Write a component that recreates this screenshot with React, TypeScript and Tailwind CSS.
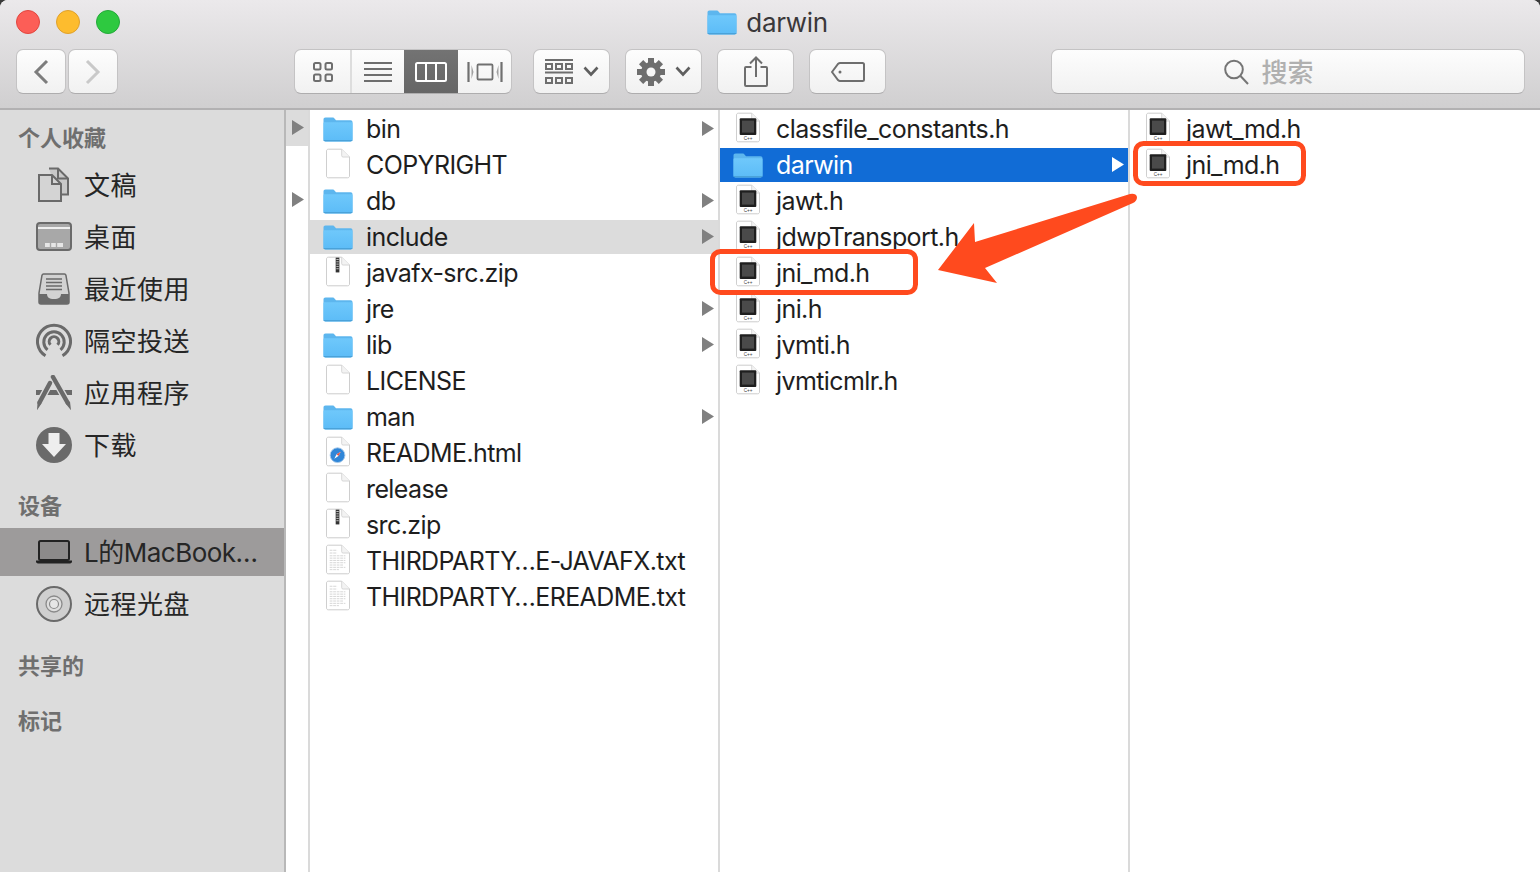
import React from "react";

const FONT = "font-['Inter','Noto_Sans_CJK_SC',sans-serif]";

function Folder({ w = 30, h = 25 }: { w?: number; h?: number }) {
  return (
    <svg width={w} height={h} viewBox="0 0 30 25" className="shrink-0">
      <defs>
        <linearGradient id="fg" x1="0" y1="0" x2="0" y2="1">
          <stop offset="0" stopColor="#6fc8fb" />
          <stop offset="1" stopColor="#5cbcf7" />
        </linearGradient>
      </defs>
      <path d="M0.5 2.5C0.5 1.2 1.2.5 2.5.5h7c1 0 1.6.4 2.2 1.2l1.3 1.6h14.5c1.3 0 2 .7 2 2v17.2c0 1.3-.7 2-2 2h-25c-1.3 0-2-.7-2-2z" fill="#5db6ee" />
      <path d="M0.5 6.5c0-.8.5-1.3 1.3-1.3h26.4c.8 0 1.3.5 1.3 1.3v15.7c0 1.3-.7 2-2 2h-25c-1.3 0-2-.7-2-2z" fill="url(#fg)" />
      <path d="M.5 23h29v.6c-.3.5-.9.7-1.6.7H2.1c-.7 0-1.3-.2-1.6-.7z" fill="#4aa2d9" />
    </svg>
  );
}

function Sheet({ children }: { children?: React.ReactNode }) {
  return (
    <svg width="24" height="31" viewBox="0 0 26 32" className="-mt-[3px] shrink-0">
      <path d="M2.5.5H17L25.5 9v20.5c0 1-.8 2-2 2h-21c-1.2 0-2-1-2-2v-27c0-1 .8-2 2-2z" fill="#fff" stroke="#c8c8c8" />
      <path d="M17 .5V7.500c0 1 .6 1.500 1.500 1.500H25.500" fill="#f3f3f3" stroke="#d4d4d4" />
      {children}
    </svg>
  );
}

function PlainFile() {
  return <Sheet />;
}

function ZipFile() {
  return (
    <Sheet>
      <rect x="10.500" y="1" width="4" height="16" fill="#333" />
      <path d="M11.200 3h2.600M11.200 5.500h2.600M11.200 8h2.600M11.200 10.500h2.600M11.200 13h2.600" stroke="#ddd" strokeWidth=".9" />
    </Sheet>
  );
}

function HeaderFile() {
  return (
    <Sheet>
      <rect x="4" y="6" width="18" height="18" rx="1" fill="#1f1f1f" />
      <rect x="6.500" y="8.500" width="13" height="13" fill="#4a4a4a" />
      <text x="13" y="29.500" textAnchor="middle" fontSize="5" fill="#444" fontFamily="Liberation Sans, sans-serif">C++</text>
    </Sheet>
  );
}

function HtmlFile() {
  return (
    <Sheet>
      <circle cx="12.500" cy="20" r="8" fill="#2f86d8" stroke="#a7c9e8" />
      <path d="M16 16.200 13.500 21 9 23.800 11.500 19z" fill="#fff" />
      <path d="M16 16.200 13.500 21 11.500 19z" fill="#e8503f" />
    </Sheet>
  );
}

function TextFile() {
  return (
    <Sheet>
      <path d="M4 6h8M4 9h8M4 12h17M4 14.500h17M4 17h17M4 19.500h17M4 22h15M4 24.500h17M4 27h10" stroke="#d2d2d2" strokeWidth="1" strokeDasharray="3 .8" />
    </Sheet>
  );
}

type Kind = "folder" | "plain" | "zip" | "h" | "html" | "text";

function FileIcon({ kind }: { kind: Kind }) {
  if (kind === "folder") return <Folder />;
  if (kind === "zip") return <ZipFile />;
  if (kind === "h") return <HeaderFile />;
  if (kind === "html") return <HtmlFile />;
  if (kind === "text") return <TextFile />;
  return <PlainFile />;
}

function Tri({ color = "#808080" }: { color?: string }) {
  return (
    <svg width="12" height="15" viewBox="0 0 12 15" className="mb-[2px]">
      <path d="M0 0 12 7.500 0 15z" fill={color} />
    </svg>
  );
}

type Row = { name: string; kind: Kind; arrow?: boolean; state?: "blue" | "gray" };

function Column({ rows, className }: { rows: Row[]; className: string }) {
  return (
    <div className={`flex flex-col gap-[2px] pt-[2px] ${className}`}>
      {rows.map((r) => (
        <div
          key={r.name}
          className={`relative flex h-[34px] items-center pr-[4px] ${
            r.state === "blue" ? "bg-[#116cd6] text-white" : r.state === "gray" ? "bg-[#dcdcdc] text-[#1e1e1e]" : "text-[#1e1e1e]"
          }`}
        >
          <div className="flex w-[56px] shrink-0 justify-center">
            <FileIcon kind={r.kind} />
          </div>
          <span className="flex-1 whitespace-nowrap pt-[2px] text-[25px] tracking-[-0.6px]">{r.name}</span>
          {r.arrow && <Tri color={r.state === "blue" ? "#ffffff" : "#808080"} />}
        </div>
      ))}
    </div>
  );
}

const col1: Row[] = [
  { name: "bin", kind: "folder", arrow: true },
  { name: "COPYRIGHT", kind: "plain" },
  { name: "db", kind: "folder", arrow: true },
  { name: "include", kind: "folder", arrow: true, state: "gray" },
  { name: "javafx-src.zip", kind: "zip" },
  { name: "jre", kind: "folder", arrow: true },
  { name: "lib", kind: "folder", arrow: true },
  { name: "LICENSE", kind: "plain" },
  { name: "man", kind: "folder", arrow: true },
  { name: "README.html", kind: "html" },
  { name: "release", kind: "plain" },
  { name: "src.zip", kind: "zip" },
  { name: "THIRDPARTY…E-JAVAFX.txt", kind: "text" },
  { name: "THIRDPARTY…EREADME.txt", kind: "text" },
];

const col2: Row[] = [
  { name: "classfile_constants.h", kind: "h" },
  { name: "darwin", kind: "folder", arrow: true, state: "blue" },
  { name: "jawt.h", kind: "h" },
  { name: "jdwpTransport.h", kind: "h" },
  { name: "jni_md.h", kind: "h" },
  { name: "jni.h", kind: "h" },
  { name: "jvmti.h", kind: "h" },
  { name: "jvmticmlr.h", kind: "h" },
];

const col3: Row[] = [
  { name: "jawt_md.h", kind: "h" },
  { name: "jni_md.h", kind: "h" },
];

const G = "#6a6a6a";

const sideIcons: Record<string, React.ReactNode> = {
  doc: (
    <svg width="36" height="36" viewBox="0 0 36 36">
      <path d="M13 1.500h9l10 10v16H22" fill="#c9c9c9" stroke={G} strokeWidth="2" />
      <path d="M22 1.500v10h10" fill="none" stroke={G} strokeWidth="2" />
      <path d="M3 8h13l9 9v17H3z" fill="#d4d4d4" stroke={G} strokeWidth="2" />
      <path d="M16 8v9h9" fill="none" stroke={G} strokeWidth="2" />
    </svg>
  ),
  desk: (
    <svg width="36" height="30" viewBox="0 0 36 30">
      <rect x="1" y="1" width="34" height="27" rx="3" fill="#a8a8a8" stroke={G} strokeWidth="2" />
      <path d="M2 6h32" stroke="#efefef" strokeWidth="2" />
      <path d="M9 25v-4h18v4z" fill="#e6e6e6" />
      <path d="M14.500 21v4M20.500 21v4" stroke="#a8a8a8" strokeWidth="1.400" />
    </svg>
  ),
  recent: (
    <svg width="32" height="32" viewBox="0 0 32 32">
      <path d="M5.500 1h21c.8 0 1.200.4 1.400 1.200L31 20v9c0 1.200-.8 2-2 2H3c-1.200 0-2-.8-2-2v-9L4 2.200C4.300 1.400 4.700 1 5.500 1z" fill="#d2d2d2" stroke={G} strokeWidth="1.500" />
      <path d="M8 6h16M8 9.500h16M8 13h16M8 16.500h16" stroke={G} strokeWidth="1.600" />
      <path d="M1 21h8c0 3 2 5 7 5s7-2 7-5h8v8c0 1.200-.8 2-2 2H3c-1.200 0-2-.8-2-2z" fill={G} />
    </svg>
  ),
  air: (
    <svg width="36" height="36" viewBox="0 0 36 36" fill="none" stroke={G} strokeWidth="3">
      <path d="M9.500 32.800A16.500 16.500 0 1 1 26.500 32.800" />
      <path d="M11.500 26.800A10.200 10.200 0 1 1 24.500 26.800" />
      <path d="M14.500 21.800A4.800 4.800 0 1 1 21.500 21.800" />
    </svg>
  ),
  app: (
    <svg width="40" height="36" viewBox="4 3 40 36">
      <rect x="6" y="18" width="36" height="5" fill={G} />
      <path d="M13 23h22l-2.500-5h-17z" fill="#c8c8c8" />
      <path d="M16 18h16v5H16z" fill={G} />
      <path d="M23 5l16 28" stroke="#dcdcdc" strokeWidth="7" />
      <path d="M20 11 8 33" stroke="#dcdcdc" strokeWidth="7" />
      <path d="M23 5l14.500 25.500" stroke={G} strokeWidth="4.500" strokeLinecap="round" />
      <path d="M20 11 9.500 30.500" stroke={G} strokeWidth="4.500" strokeLinecap="round" />
      <path d="M35.500 31.500 41 38.200l-1-8.700zM11.500 31.500 7 38.200l.6-8.700z" fill={G} />
    </svg>
  ),
  down: (
    <svg width="36" height="36" viewBox="0 0 36 36">
      <circle cx="18" cy="18" r="18" fill={G} />
      <path d="M12.500 6h11v11H30L18 30 6 17h6.500z" fill="#eeeeee" />
    </svg>
  ),
  mac: (
    <svg width="36" height="24" viewBox="0 0 36 24">
      <rect x="3" y="1" width="30" height="19" rx="1.500" fill="#8c8a8a" stroke="#222" strokeWidth="2" />
      <path d="M0 20.500h36v1c0 1-1 2-2 2H2c-1 0-2-1-2-2z" fill="#222" />
    </svg>
  ),
  disc: (
    <svg width="36" height="36" viewBox="0 0 36 36">
      <circle cx="18" cy="18" r="17" fill="#cfcfcf" stroke={G} strokeWidth="2" />
      <circle cx="18" cy="18" r="8" fill="#dedede" stroke="#8a8a8a" strokeWidth="1.300" />
      <circle cx="18" cy="18" r="4.500" fill="#e6e6e6" stroke="#8a8a8a" strokeWidth="1.200" />
    </svg>
  ),
};

function SideHead({ t, className = "" }: { t: string; className?: string }) {
  return <div className={`flex h-[44px] items-center pl-[18px] text-[22px] font-bold text-[#6f6f6f] ${className}`}>{t}</div>;
}

function SideItem({ icon, t, selected }: { icon: string; t: string; selected?: boolean }) {
  return (
    <div className={`flex items-center text-[26px] text-[#262626] ${selected ? "h-[48px] bg-[#9d9b9b] text-[#111111]" : "h-[52px]"}`}>
      <div className="ml-[34px] flex w-[40px] justify-center">{sideIcons[icon]}</div>
      <span className={`ml-[10px] whitespace-nowrap ${selected ? "tracking-[-0.5px]" : "tracking-[0.5px]"}`}>{t}</span>
    </div>
  );
}

function Btn({ className = "", children }: { className?: string; children?: React.ReactNode }) {
  return (
    <div className={`flex h-[45px] items-center justify-center rounded-[7px] border border-[#c4c3c4] border-b-[#aeadae] bg-gradient-to-b from-[#fdfdfd] to-[#f1f1f1] ${className}`}>
      {children}
    </div>
  );
}

function Chevron() {
  return (
    <svg width="16" height="11" viewBox="0 0 16 11" fill="none" stroke="#5f5f5f" strokeWidth="2.600">
      <path d="M1.500 1.500 8 8.500l6.500-7" />
    </svg>
  );
}

const teeth = [0, 45, 90, 135, 180, 225, 270, 315];

export default function App() {
  return (
    <div className={`h-[872px] w-[1540px] overflow-hidden bg-[#3a3a3a] ${FONT}`}>
      <div className="relative flex h-full flex-col overflow-hidden rounded-t-[8px] bg-white">
        {/* toolbar */}
        <div className="flex h-[110px] shrink-0 flex-col border-b-2 border-[#b2b1b2] bg-gradient-to-b from-[#ebe9eb] to-[#d0cfd0]">
          <div className="relative flex h-[44px] shrink-0 items-center justify-center gap-[9px] pr-[5px] pt-[1px]">
            <div className="absolute left-[16px] top-[10px] flex gap-[16px]">
              <div className="h-[24px] w-[24px] rounded-full border border-[#e2463f] bg-[#fc5e57]" />
              <div className="h-[24px] w-[24px] rounded-full border border-[#e0a12b] bg-[#fdbc2e]" />
              <div className="h-[24px] w-[24px] rounded-full border border-[#24a93a] bg-[#2ec940]" />
            </div>
            <Folder />
            <span className="text-[26px] tracking-[-0.35px] text-[#3a383a]">darwin</span>
          </div>
          <div className="flex h-[45px] shrink-0 items-start pl-[16px] pt-[5px]">
            <div className="flex gap-[2px]">
              <Btn className="w-[50px]">
                <svg width="16" height="26" viewBox="0 0 16 26" fill="none" stroke="#7d7d7d" strokeWidth="3">
                  <path d="M14 2 3 13l11 11" />
                </svg>
              </Btn>
              <Btn className="w-[50px]">
                <svg width="16" height="26" viewBox="0 0 16 26" fill="none" stroke="#c9c9c9" strokeWidth="3">
                  <path d="M2 2l11 11L2 24" />
                </svg>
              </Btn>
            </div>
            <div className="ml-[176px] flex h-[45px] w-[218px] overflow-hidden rounded-[7px] border border-[#c4c3c4] border-b-[#aeadae] bg-gradient-to-b from-[#fdfdfd] to-[#f1f1f1]">
              <div className="flex w-[57px] items-center justify-center border-r-2 border-[#dddddd]">
                <svg width="20" height="20" viewBox="0 0 20 20" fill="none" stroke="#6e6e6e" strokeWidth="2">
                  <rect x="1" y="1" width="6.500" height="6.500" rx="1.500" />
                  <rect x="12.500" y="1" width="6.500" height="6.500" rx="1.500" />
                  <rect x="1" y="12.500" width="6.500" height="6.500" rx="1.500" />
                  <rect x="12.500" y="12.500" width="6.500" height="6.500" rx="1.500" />
                </svg>
              </div>
              <div className="flex w-[52px] items-center justify-center">
                <svg width="28" height="20" viewBox="0 0 28 20" stroke="#6e6e6e" strokeWidth="2">
                  <path d="M0 1h28M0 7h28M0 13h28M0 19h28" />
                </svg>
              </div>
              <div className="flex w-[54px] items-center justify-center bg-gradient-to-b from-[#737373] to-[#666666]">
                <svg width="32" height="20" viewBox="0 0 32 20" fill="none" stroke="#ffffff" strokeWidth="2">
                  <rect x="1" y="1" width="30" height="18" rx="1.500" />
                  <path d="M11 1v18M21 1v18" />
                </svg>
              </div>
              <div className="flex flex-1 items-center justify-center">
                <svg width="36" height="20" viewBox="0 0 36 20" fill="none" stroke="#707070" strokeWidth="1.800">
                  <path d="M1.500 0v20M34.500 0v20" strokeWidth="2.200" />
                  <rect x="10.500" y="2.500" width="15" height="15" rx="1" />
                  <path d="M4.500 3v14l2-7zM31.500 3v14l-2-7z" fill="#a0a0a0" stroke="none" />
                </svg>
              </div>
            </div>
            <Btn className="ml-[21px] w-[77px] gap-[10px]">
              <svg width="28" height="26" viewBox="0 0 28 26" fill="none" stroke="#6e6e6e" strokeWidth="2">
                <path d="M0 1h28" />
                <path d="M0 13.500h28" />
                <rect x="1" y="5" width="6" height="5" />
                <rect x="11" y="5" width="6" height="5" />
                <rect x="21" y="5" width="6" height="5" />
                <rect x="1" y="19" width="6" height="5" />
                <rect x="11" y="19" width="6" height="5" />
                <rect x="21" y="19" width="6" height="5" />
              </svg>
              <Chevron />
            </Btn>
            <Btn className="ml-[15px] w-[77px] gap-[10px]">
              <svg width="28" height="28" viewBox="0 0 28 28">
                {teeth.map((a) => (
                  <rect key={a} x="11" y="0" width="6" height="8" fill="#6e6e6e" transform={`rotate(${a} 14 14)`} />
                ))}
                <circle cx="14" cy="14" r="10" fill="#6e6e6e" />
                <circle cx="14" cy="14" r="4.500" fill="#f6f6f6" />
              </svg>
              <Chevron />
            </Btn>
            <Btn className="ml-[15px] w-[77px]">
              <svg width="24" height="31" viewBox="0 0 24 31" fill="none" stroke="#6e6e6e" strokeWidth="2">
                <path d="M7.500 11H2a1 1 0 0 0-1 1v17a1 1 0 0 0 1 1h20a1 1 0 0 0 1-1V12a1 1 0 0 0-1-1h-5.500" />
                <path d="M12 21V1.500M6 7.500l6-6 6 6" />
              </svg>
            </Btn>
            <Btn className="ml-[15px] w-[77px]">
              <svg width="34" height="20" viewBox="0 0 34 20" fill="none" stroke="#6e6e6e" strokeWidth="2">
                <path d="M9 1h22.500c.9 0 1.500.6 1.500 1.500v15c0 .9-.6 1.500-1.500 1.500H9c-.8 0-1.300-.3-1.800-.7L1 10l6.200-8.300C7.700 1.300 8.200 1 9 1z" />
                <circle cx="9" cy="10" r="1.500" fill="#6e6e6e" stroke="none" />
              </svg>
            </Btn>
            <Btn className="ml-[165px] w-[474px] gap-[12px] pr-[38px]">
              <svg width="25" height="26" viewBox="0 0 25 26" fill="none" stroke="#757575" strokeWidth="2">
                <circle cx="10" cy="10.500" r="8.800" />
                <path d="M16.500 17 24 25" />
              </svg>
              <span className="pt-[2px] text-[26px] font-medium text-[#b0b0b0]">搜索</span>
            </Btn>
          </div>
        </div>

        {/* body */}
        <div className="flex min-h-0 flex-1">
          <div className="w-[286px] shrink-0 border-r-2 border-[#b8b8b8] bg-[#dcdcdc] pt-[5px]">
            <SideHead t="个人收藏" className="pt-[2px]" />
            <SideItem icon="doc" t="文稿" />
            <SideItem icon="desk" t="桌面" />
            <SideItem icon="recent" t="最近使用" />
            <SideItem icon="air" t="隔空投送" />
            <SideItem icon="app" t="应用程序" />
            <SideItem icon="down" t="下载" />
            <SideHead t="设备" className="mt-[13px]" />
            <SideItem icon="mac" t="L的MacBook…" selected />
            <div className="mt-[2px]">
              <SideItem icon="disc" t="远程光盘" />
            </div>
            <SideHead t="共享的" className="mt-[14px]" />
            <SideHead t="标记" className="mt-[11px]" />
          </div>
          <div className="flex w-[24px] shrink-0 flex-col border-r-2 border-[#dadada]">
            <div className="flex h-[36px] items-center justify-center bg-[#dcdcdc] pl-[2px]"><Tri /></div>
            <div className="h-[36px]" />
            <div className="flex h-[36px] items-center justify-center pl-[2px]"><Tri /></div>
          </div>
          <Column rows={col1} className="w-[410px] shrink-0 border-r-2 border-[#dadada]" />
          <Column rows={col2} className="w-[410px] shrink-0 border-r-2 border-[#dadada]" />
          <Column rows={col3} className="flex-1" />
        </div>

        {/* annotations */}
        <svg width="1540" height="872" viewBox="0 0 1540 872" className="pointer-events-none absolute left-0 top-0">
          <rect x="712.500" y="251.500" width="203" height="41" rx="8" fill="none" stroke="#ff4a1e" strokeWidth="5" />
          <rect x="1135.500" y="143.500" width="168" height="40" rx="8" fill="none" stroke="#ff4a1e" strokeWidth="5" />
          <path d="M938 270 974 223 975 242 1130 194Q1136 193 1137 197 1137 201 1133 203L985 268 997 283z" fill="#ff4a1e" />
        </svg>
      </div>
    </div>
  );
}
